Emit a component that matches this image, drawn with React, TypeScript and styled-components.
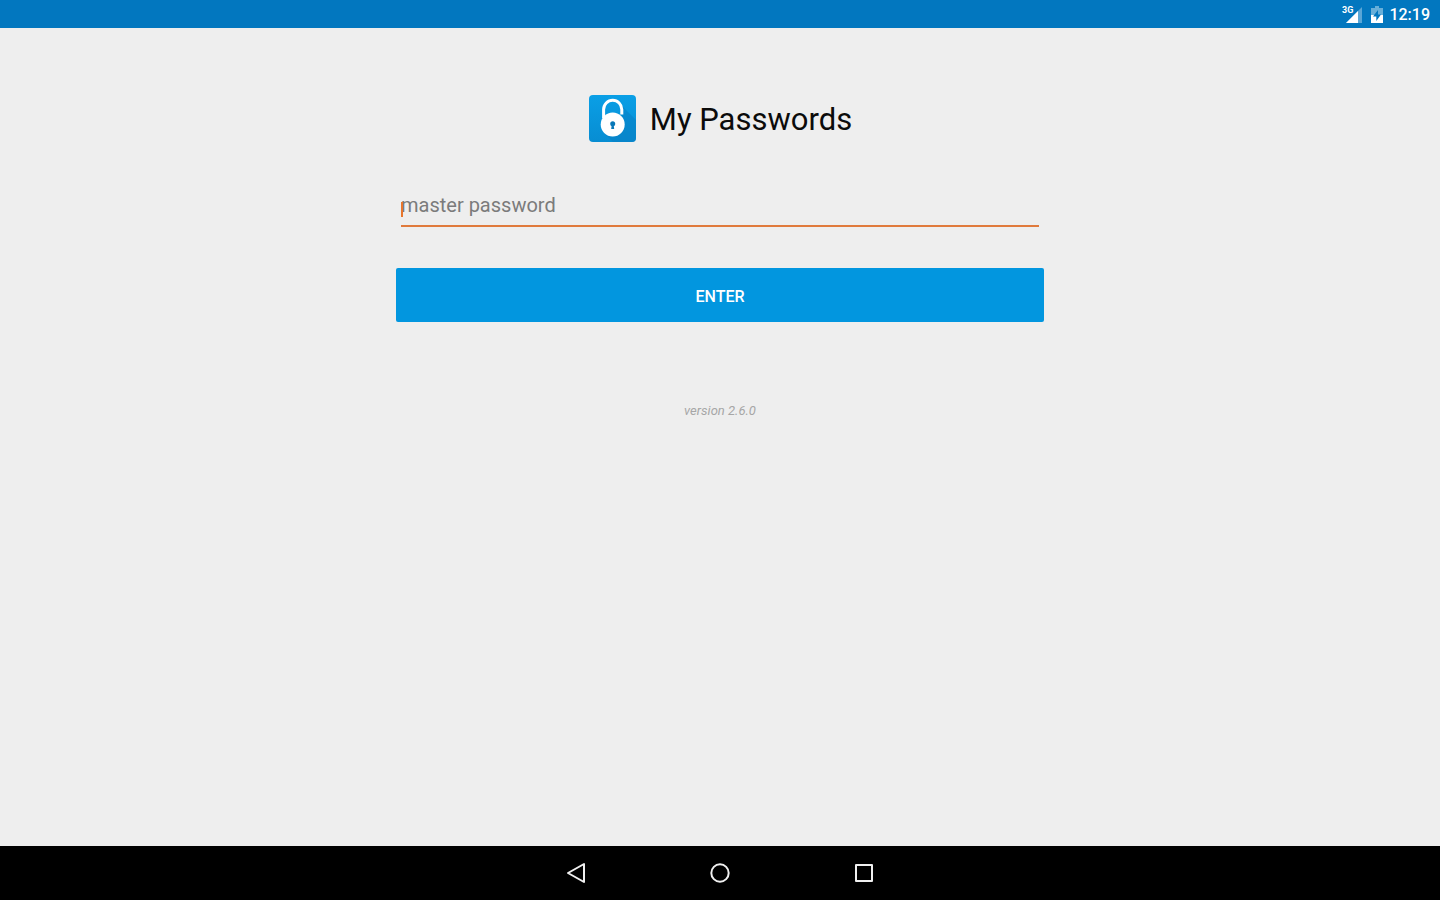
import React from "react";
import styled, { createGlobalStyle } from "styled-components";

const GlobalStyle = createGlobalStyle`
  *, *::before, *::after { box-sizing: border-box; }
  body {
    margin: 0;
    background: #eeeeee;
    font-family: Roboto, "Liberation Sans", sans-serif;
  }
`;

const Screen = styled.div`
  display: flex;
  flex-direction: column;
  min-height: 100vh;
`;

const StatusBar = styled.header`
  display: flex;
  align-items: center;
  justify-content: flex-end;
  height: 28px;
  padding: 2px 10px 0 0;
  background: #0277bf;
  color: #ffffff;
`;

const Signal = styled.svg`
  width: 20px;
  height: 18px;
  margin-right: 9px;
  overflow: visible;
`;

const Battery = styled.svg`
  width: 12px;
  height: 18px;
  margin-right: 6px;
`;

const Clock = styled.time`
  font-size: 16px;
  font-weight: 500;
  line-height: 20px;
`;

const Main = styled.main`
  flex: 1;
  display: flex;
  flex-direction: column;
  align-items: center;
  padding: 66px 16px 24px;
`;

const Brand = styled.div`
  display: flex;
  align-items: center;
  gap: 14px;
`;

const Logo = styled.svg`
  width: 48px;
  height: 48px;
`;

const Title = styled.h1`
  margin: 0;
  padding-top: 4px;
  font-size: 31px;
  font-weight: 400;
  line-height: 44px;
  color: #0b0b0b;
`;

const LoginForm = styled.form`
  display: flex;
  flex-direction: column;
  width: 100%;
  max-width: 648px;
  margin-top: 43px;
`;

const Field = styled.label`
  position: relative;
  display: block;
  margin: 0 5px 41px;
`;

const Caret = styled.span`
  position: absolute;
  left: 0;
  top: 17px;
  width: 2px;
  height: 15px;
  background: #e8762c;
`;

const PasswordInput = styled.input`
  display: block;
  width: 100%;
  height: 42px;
  padding: 0;
  border: 0;
  border-bottom: 2px solid #e07a3c;
  border-radius: 0;
  outline: 0;
  background: transparent;
  color: #212121;
  caret-color: #e8762c;
  font-family: inherit;
  font-size: 20px;
  line-height: 24px;

  &::placeholder {
    color: #7b7b7b;
    opacity: 1;
  }
`;

const EnterButton = styled.button`
  height: 54px;
  padding: 2px 0 0;
  border: 0;
  border-radius: 2px;
  background: #0296df;
  color: #ffffff;
  font-family: inherit;
  font-size: 16px;
  font-weight: 500;
  cursor: pointer;
`;

const Version = styled.p`
  margin: 79px 0 0;
  font-size: 13px;
  font-style: italic;
  line-height: 20px;
  color: #a6a6a6;
`;

const NavBar = styled.nav`
  display: flex;
  align-items: center;
  justify-content: center;
  gap: 96px;
  height: 54px;
  background: #000000;
`;

const NavButton = styled.button`
  width: 48px;
  height: 48px;
  padding: 12px;
  border: 0;
  background: transparent;
  cursor: pointer;
`;

const NavIcon = styled.svg`
  display: block;
  width: 24px;
  height: 24px;
  fill: none;
  stroke: #f0f0f0;
  stroke-width: 2;
  stroke-linejoin: round;
`;

const SignalLabel = styled.text`
  font-family: Roboto, sans-serif;
  font-size: 9px;
  font-weight: 700;
  fill: #ffffff;
`;

export default function App() {
  return (
    <Screen>
      <GlobalStyle />
      <StatusBar>
        <Signal viewBox="0 0 20 18" role="img" aria-label="3G signal">
          <path d="M20 1V17H4Z" fill="#5aa6d6" />
          <path d="M16 5V17H4Z" fill="#ffffff" />
          <SignalLabel x="0" y="7">3G</SignalLabel>
        </Signal>
        <Battery viewBox="0 0 12 18" role="img" aria-label="Battery charging">
          <path d="M4 0H8V2H12V9H0V2H4Z" fill="#68afd9" />
          <path d="M0 9H12V17H0Z" fill="#ffffff" />
          <path d="M7 4L2 10.5H5.3V15L10 8.5H7Z" fill="#0277bf" />
        </Battery>
        <Clock>12:19</Clock>
      </StatusBar>

      <Main>
        <Brand>
          <Logo viewBox="0 0 48 48" aria-hidden="true">
            <defs>
              <linearGradient id="tile" x1="0" y1="0" x2="0" y2="1">
                <stop offset="0" stopColor="#0a9fe6" />
                <stop offset="1" stopColor="#078dd2" />
              </linearGradient>
              <clipPath id="tileClip">
                <rect x="1" y="1" width="47" height="47" rx="4" />
              </clipPath>
            </defs>
            <rect x="1" y="1" width="47" height="47" rx="4" fill="url(#tile)" />
            <path
              d="M32 10L48 26V48H25L16 39L34 25Z"
              fill="#0780c4"
              opacity="0.55"
              clipPath="url(#tileClip)"
            />
            <path
              d="M15.6 24V15.4a9.1 9.1 0 0 1 18.2 0V20.5"
              fill="none"
              stroke="#ffffff"
              strokeWidth="3"
            />
            <circle cx="24.7" cy="30.6" r="12" fill="#ffffff" />
            <circle cx="24.7" cy="29.8" r="2.5" fill="#0878b8" />
            <path d="M23.8 30H25.6L26.2 35H23.2Z" fill="#0878b8" />
          </Logo>
          <Title>My Passwords</Title>
        </Brand>

        <LoginForm onSubmit={(event) => event.preventDefault()}>
          <Field>
            <PasswordInput
              type="password"
              placeholder="master password"
              aria-label="master password"
            />
            <Caret aria-hidden="true" />
          </Field>
          <EnterButton type="submit">ENTER</EnterButton>
        </LoginForm>

        <Version>version 2.6.0</Version>
      </Main>

      <NavBar aria-label="System navigation">
        <NavButton type="button" aria-label="Back">
          <NavIcon viewBox="0 0 24 24">
            <path d="M4 12L20 3V21Z" />
          </NavIcon>
        </NavButton>
        <NavButton type="button" aria-label="Home">
          <NavIcon viewBox="0 0 24 24">
            <circle cx="12" cy="12" r="8.7" />
          </NavIcon>
        </NavButton>
        <NavButton type="button" aria-label="Recent apps">
          <NavIcon viewBox="0 0 24 24">
            <rect x="4" y="4" width="16" height="16" />
          </NavIcon>
        </NavButton>
      </NavBar>
    </Screen>
  );
}
